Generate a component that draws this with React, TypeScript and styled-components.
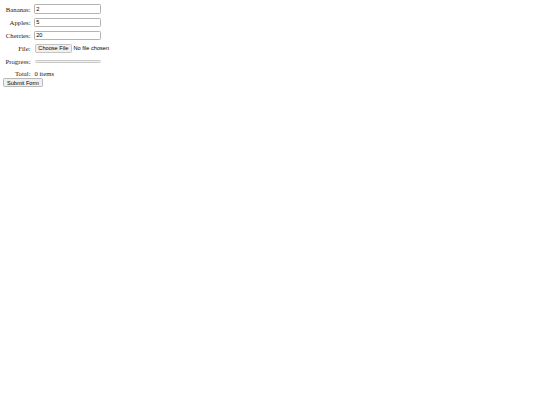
import { Fragment } from 'react';
import styled, { createGlobalStyle } from 'styled-components';

const GlobalStyle = createGlobalStyle`
  body {
    margin: 0;
    background: #fff;
    color: #000;
  }
`;

// the whole page is drawn at desktop size, then shrunk to the frame
const Page = styled.div`
  zoom: 0.421875;
  padding: 8px;
  font-family: "Liberation Serif", "Times New Roman", serif;
  font-size: 16px;
  color: #222;
`;

const Form = styled.form`
  display: flex;
  flex-direction: column;
  align-items: flex-start;
`;

const Fields = styled.div`
  display: grid;
  grid-template-columns: auto 160px;
  grid-template-rows: repeat(5, 23px) 18px;
  column-gap: 8px;
  row-gap: 8px;
  align-items: center;
  padding: 2px 0 0 5px;
`;

const Label = styled.label`
  text-align: right;
  white-space: nowrap;
`;

const Control = styled.div`
  display: flex;
  align-items: center;
  white-space: nowrap;
`;

const TextInput = styled.input`
  box-sizing: border-box;
  width: 160px;
  height: 22px;
  padding: 1px 3px;
  font-family: "Liberation Sans", Arial, sans-serif;
  font-size: 13.333px;
  color: #000;
  border: 1px solid #b4b4b4;
  border-radius: 3px;
  outline: none;
`;

const FileInput = styled.input`
  font-family: "Liberation Sans", Arial, sans-serif;
  font-size: 13.333px;
  color: #000;
  margin-left: 2px;

  &::file-selector-button {
    font-family: "Liberation Sans", Arial, sans-serif;
    font-size: 13.333px;
    background: #f0f0f0;
    border: 1px solid #c4c4c4;
    border-radius: 3px;
    padding: 1px 6px;
    margin-right: 4px;
  }
`;

const Progress = styled.progress`
  appearance: none;
  -webkit-appearance: none;
  box-sizing: border-box;
  width: 160px;
  height: 8px;
  margin-left: 2px;
  border: 1px solid #c8c8c8;
  border-radius: 4px;
  background: #f2f2f2;
  overflow: hidden;

  &::-webkit-progress-bar {
    background: #f2f2f2;
    border-radius: 4px;
  }
  &::-webkit-progress-value {
    background: #f2f2f2;
  }
`;

const Total = styled.span`
  padding-left: 1px;
`;

const SubmitButton = styled.button`
  margin-top: 3px;
  padding: 1px 6px;
  font-family: "Liberation Sans", Arial, sans-serif;
  font-size: 13.333px;
  color: #000;
  background: #f0f0f0;
  border: 1px solid #b8b8b8;
  border-radius: 3px;
`;

const fields = [
  { id: 'bananas', label: 'Bananas:', value: '2' },
  { id: 'apples', label: 'Apples:', value: '5' },
  { id: 'cherries', label: 'Cherries:', value: '20' },
];

const App = () => {
  return (
    <Page>
      <GlobalStyle />
      <Form onSubmit={(e) => e.preventDefault()}>
        <Fields>
          {fields.map((f) => (
            <Fragment key={f.id}>
              <Label htmlFor={f.id}>{f.label}</Label>
              <Control>
                <TextInput id={f.id} type="text" defaultValue={f.value} />
              </Control>
            </Fragment>
          ))}
          <Label htmlFor="file">File:</Label>
          <Control>
            <FileInput id="file" type="file" />
          </Control>
          <Label>Progress:</Label>
          <Control>
            <Progress value={0} max={100} />
          </Control>
          <Label>Total:</Label>
          <Control>
            <Total>0 items</Total>
          </Control>
        </Fields>
        <SubmitButton type="submit">Submit Form</SubmitButton>
      </Form>
    </Page>
  );
};

export default App;
